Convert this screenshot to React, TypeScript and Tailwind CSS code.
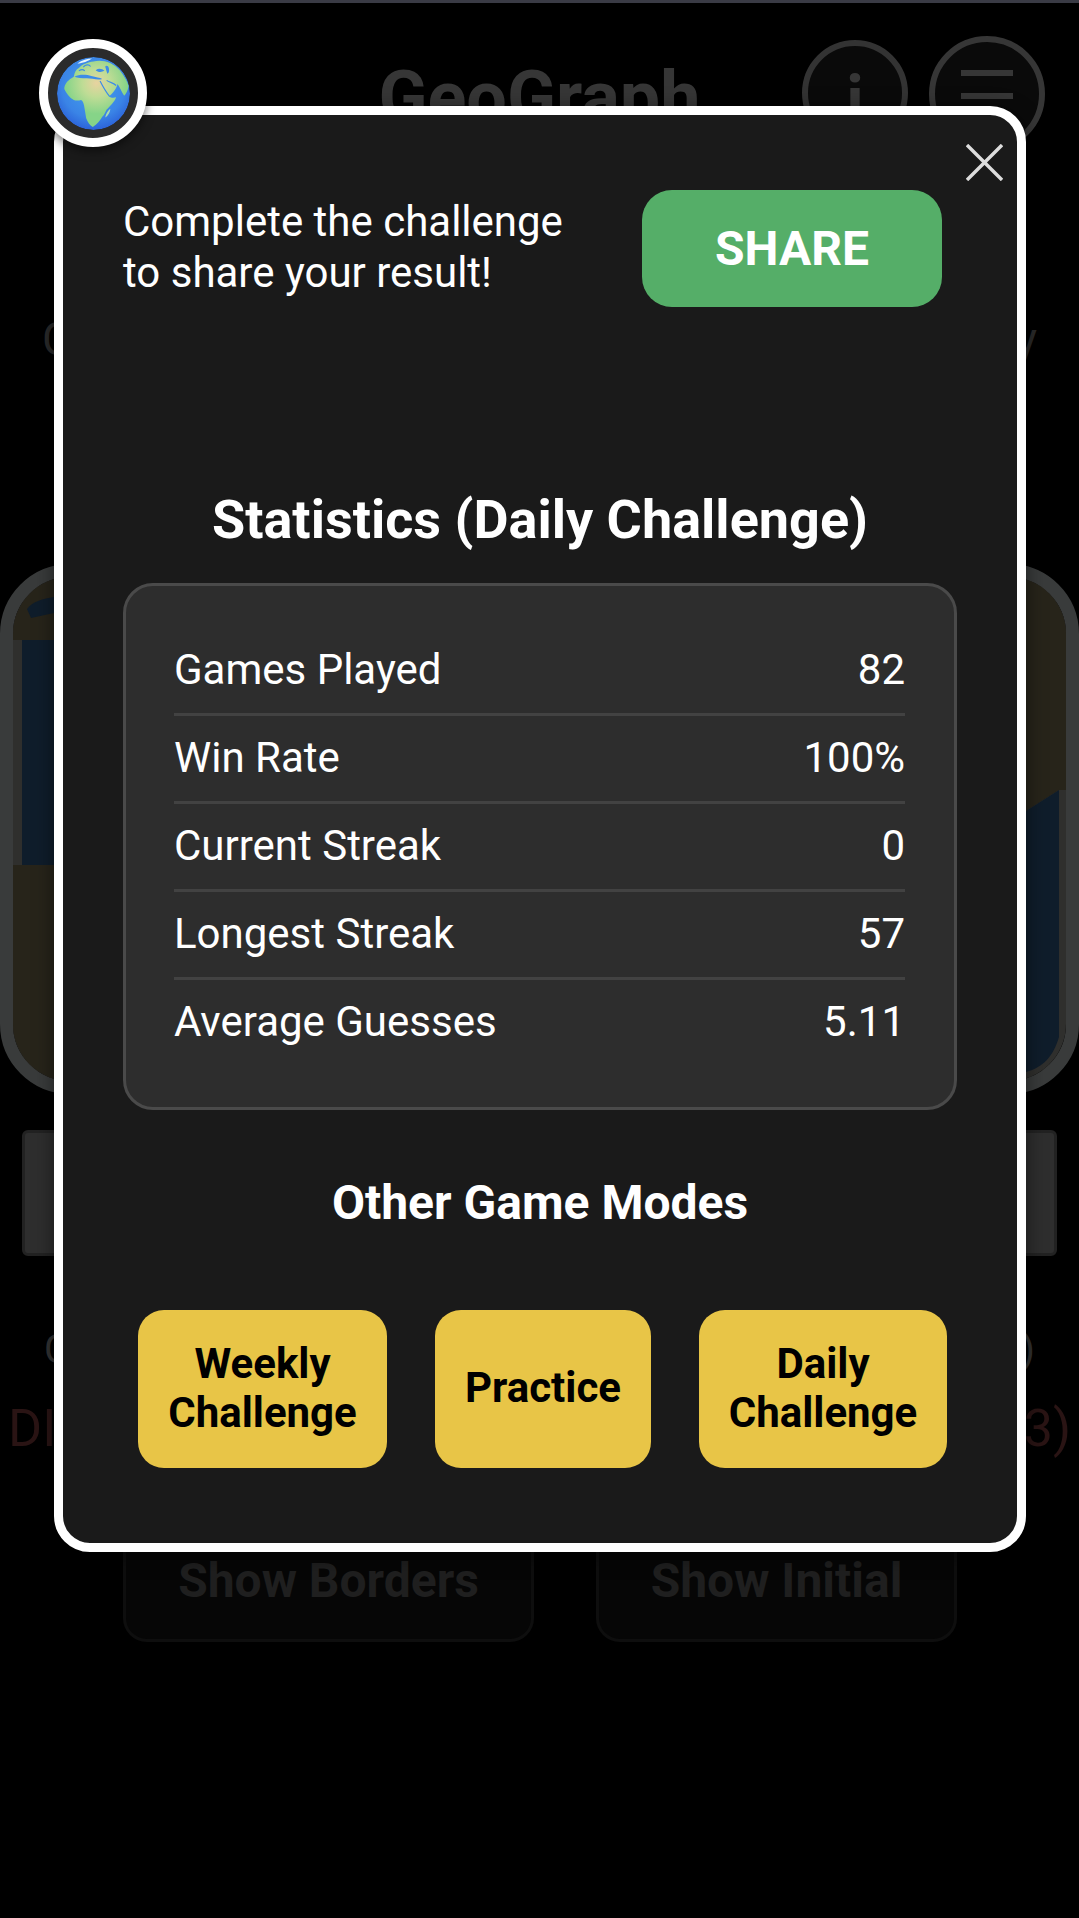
const stats = [
  ["Games Played", "82"],
  ["Win Rate", "100%"],
  ["Current Streak", "0"],
  ["Longest Streak", "57"],
  ["Average Guesses", "5.11"],
];

function Globe() {
  return (
    <svg viewBox="0 0 100 100" className="w-[73px] h-[73px] block">
      <defs>
        <radialGradient id="sea" cx="50%" cy="40%" r="62%">
          <stop offset="0%" stopColor="#45a3ee" />
          <stop offset="70%" stopColor="#3a84e6" />
          <stop offset="100%" stopColor="#2a5fd8" />
        </radialGradient>
        <radialGradient id="land" gradientUnits="userSpaceOnUse" cx="54" cy="36" r="42">
          <stop offset="0%" stopColor="#e8d3a0" />
          <stop offset="45%" stopColor="#bfdc95" />
          <stop offset="100%" stopColor="#86d488" />
        </radialGradient>
        <clipPath id="ball"><circle cx="50" cy="50" r="50" /></clipPath>
      </defs>
      <g clipPath="url(#ball)">
        <circle cx="50" cy="50" r="50" fill="url(#sea)" />
        <path fill="url(#land)" d="M10 44C10 36 16 31 23 27C24 21 26 17 30 15C34 10 42 7 50 6C62 3 76 7 86 18C92 26 97 34 98 40C97 46 95 50 92 53C88 47 86 41 83 37C82 41 80 44 78 47C76 50 73 53 71 54C74 56 78 56 81 55C79 61 72 68 68 72C66 76 65 79 62 82C59 87 55 92 49 96C45 94 42 89 40 84C39 78 38 72 37 66C36 62 35 60 33 59C29 60 26 60 23 59C17 56 13 50 10 44Z" />
        <path fill="#3d8ce8" d="M24 27C31 23 41 24 47 26C53 28 59 28 62 30C56 32 47 29 41 29C34 29 28 29 24 27Z" />
        <path fill="none" stroke="#3d8ce8" strokeWidth="1.6" d="M59 33C63 41 67 48 72 54" />
        <path fill="none" stroke="#3d8ce8" strokeWidth="1.6" d="M68 32C72 35 77 35 81 39" />
        <path fill="#3d8ce8" d="M53 18C57 15 62 16 65 19C61 21 56 21 53 18Z" />
        <path fill="none" stroke="#3d8ce8" strokeWidth="1.6" d="M36 14C39 10 44 10 46 13M30 19C33 17 36 17 38 19" />
        <path fill="#3d8ce8" d="M66 13C68 11 70 12 71 15C72 19 71 22 69 23C68 20 67 16 66 13Z" />
        <path fill="#a9dcae" d="M66 83C67 78 70 73 73 71C73 75 70 81 66 83Z" />
        <path fill="#eaf6fb" d="M28 9C34 4 42 2 48 2C44 5 34 9 28 9Z" />
      </g>
    </svg>
  );
}

function MapDrawing() {
  return (
    <svg viewBox="0 0 1053 504" preserveAspectRatio="none" className="h-full w-full block">
      <rect width="1053" height="504" fill="#2f2f2d" />
      <path fill="#27241a" d="M0 0H300V63H0Z" />
      <path fill="#27241a" d="M0 288H300V504H0Z" />
      <path fill="#27241a" d="M700 0H1053V213L1046 213L1013 234L700 250Z" />
      <path fill="#0f1d2b" d="M9 63H45V288H9Z" />
      <path fill="#0f1d2b" d="M14 32C20 24 30 22 41 20V36L18 41Z" />
      <path fill="#0f1d2b" d="M1013 234L1046 213V460C1040 480 1030 490 1013 495Z" />
    </svg>
  );
}

export default function App() {
  return (
    <div className="relative w-[1079px] h-[1918px] overflow-hidden bg-black font-['Roboto',sans-serif]">
      {/* dimmed page */}
      <div className="h-[3px] bg-[#3a3b45]" />
      <header className="relative flex h-[180px] items-start justify-end gap-[21px] pt-[33px] pr-[34px]">
        <span className="absolute left-0 right-0 top-[55px] text-center text-[72px] leading-[80px] font-bold text-[#363636]">GeoGraph</span>
        <div className="mt-[4px] flex h-[106px] w-[106px] items-center justify-center rounded-full border-[6px] border-[#333333] bg-[#0a0a0a] pt-[14px] text-[66px] font-bold text-[#363636]">i</div>
        <div className="flex h-[116px] w-[116px] flex-col items-center justify-center gap-[17px] rounded-full border-[6px] border-[#363636] bg-[#0a0a0a] pt-[4px]">
          <div className="h-[6px] w-[52px] bg-[#363636]" />
          <div className="h-[6px] w-[52px] bg-[#363636]" />
          <div className="h-[6px] w-[52px] bg-[#363636]" />
        </div>
      </header>
      <p className="mt-[132px] flex justify-between px-[42px] text-[46px] leading-[48px] text-[#2a2a2a]"><span>C</span><span>y</span></p>
      <div className="mt-[201px] h-[530px] overflow-hidden rounded-[70px] border-[13px] border-[#393b3b]">
        <MapDrawing />
      </div>
      <div className="mx-[22px] mt-[36px] h-[126px] rounded-[6px] border-[3px] border-[#222222] bg-[#2e2e2e]" />
      <p className="mt-[70px] flex justify-between px-[44px] text-[40px] leading-[48px] text-[#333333]"><span>C</span><span>)</span></p>
      <p className="mt-[25px] flex justify-between pl-[8px] pr-[8px] text-[52px] leading-[60px] text-[#2a1414]"><span>DI</span><span>3)</span></p>
      <div className="mt-[61px] flex justify-between pl-[123px] pr-[122px]">
        <div className="flex h-[122px] w-[411px] items-center justify-center rounded-[24px] border-[3px] border-[#0e0e0e] bg-[#060606] text-[48px] font-bold text-[#1f1f1f]">Show Borders</div>
        <div className="flex h-[122px] w-[361px] items-center justify-center rounded-[24px] border-[3px] border-[#0e0e0e] bg-[#060606] text-[48px] font-bold text-[#1f1f1f]">Show Initial</div>
      </div>

      {/* modal */}
      <div className="absolute left-[54px] top-[106px] h-[1446px] w-[972px] rounded-[36px] border-[9px] border-white bg-[#1a1a1a] px-[60px] text-white shadow-[0_4px_20px_rgba(0,0,0,0.5)]">
        <svg viewBox="0 0 37 37" className="absolute right-[14px] top-[29px] h-[37px] w-[37px]" stroke="#dddddd" strokeWidth="3.4">
          <path d="M1 1L36 36M36 1L1 36" />
        </svg>
        <div className="flex items-start justify-between pt-[75px] pr-[15px]">
          <p className="pt-[6px] text-[42px] leading-[51px]">Complete the challenge<br />to share your result!</p>
          <button className="flex h-[117px] w-[300px] items-center justify-center rounded-[30px] bg-[#55ae68] text-[48px] font-bold text-white">SHARE</button>
        </div>
        <h2 className="mt-[180px] text-center text-[54px] leading-[66px] font-bold">Statistics (Daily Challenge)</h2>
        <div className="mt-[30px] flex h-[527px] w-[834px] flex-col rounded-[30px] border-[3px] border-[#4a4a4a] bg-[#2d2d2d] pl-[48px] pr-[49px] pt-[42px]">
          {stats.map(([k, v], i) => (
            <div key={k} className={"flex items-center justify-between pb-[2px] text-[42px] " + (i < 4 ? "h-[88px] border-b-[3px] border-[#424242]" : "h-[85px]")}>
              <span>{k}</span>
              <span>{v}</span>
            </div>
          ))}
        </div>
        <h3 className="mt-[65px] text-center text-[48px] leading-[56px] font-bold">Other Game Modes</h3>
        <div className="mt-[79px] flex gap-[48px] pl-[15px] text-[42px] leading-[49px] font-bold text-black">
          <button className="h-[158px] w-[249px] rounded-[26px] bg-[#e8c547] pb-[3px]">Weekly<br />Challenge</button>
          <button className="h-[158px] w-[216px] rounded-[26px] bg-[#e8c547] pb-[3px]">Practice</button>
          <button className="h-[158px] w-[248px] rounded-[26px] bg-[#e8c547] pb-[3px]">Daily<br />Challenge</button>
        </div>
      </div>

      {/* globe badge */}
      <div className="absolute left-[39px] top-[39px] flex h-[108px] w-[108px] items-center justify-center rounded-full border-[9px] border-white bg-[#2b2b2b] shadow-[0_4px_10px_rgba(0,0,0,0.5)]">
        <Globe />
      </div>
    </div>
  );
}
